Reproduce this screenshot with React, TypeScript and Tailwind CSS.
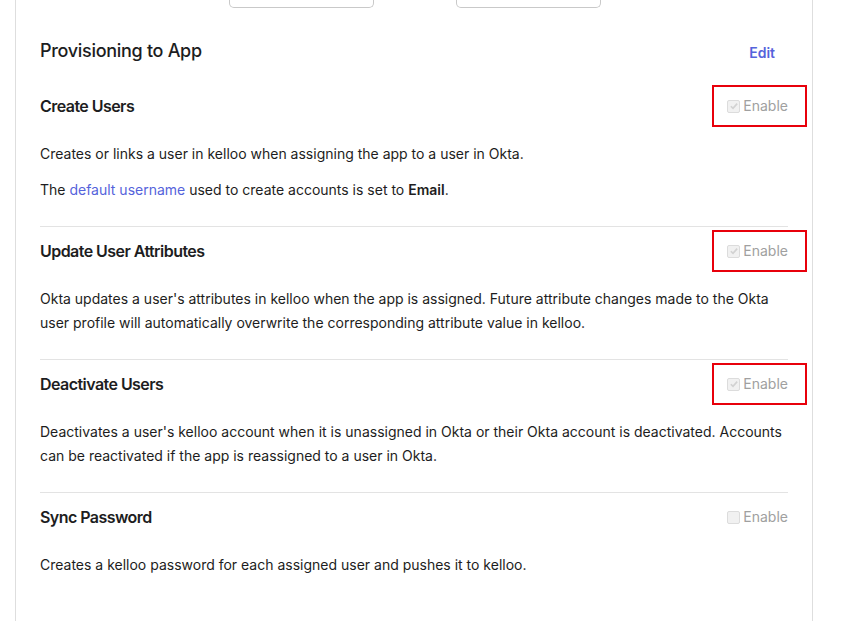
import React from "react";

type Feature = {
  title: string;
  checked: boolean;
  flagged: boolean;
  body: React.ReactNode[];
};

const features: Feature[] = [
  {
    title: "Create Users",
    checked: true,
    flagged: true,
    body: [
      "Creates or links a user in kelloo when assigning the app to a user in Okta.",
      <>
        The <a className="text-[#5563db]">default username</a> used to create accounts is set to{" "}
        <span className="font-semibold">Email</span>.
      </>,
    ],
  },
  {
    title: "Update User Attributes",
    checked: true,
    flagged: true,
    body: [
      "Okta updates a user's attributes in kelloo when the app is assigned. Future attribute changes made to the Okta user profile will automatically overwrite the corresponding attribute value in kelloo.",
    ],
  },
  {
    title: "Deactivate Users",
    checked: true,
    flagged: true,
    body: [
      "Deactivates a user's kelloo account when it is unassigned in Okta or their Okta account is deactivated. Accounts can be reactivated if the app is reassigned to a user in Okta.",
    ],
  },
  {
    title: "Sync Password",
    checked: false,
    flagged: false,
    body: ["Creates a kelloo password for each assigned user and pushes it to kelloo."],
  },
];

function EnableBox({ checked, flagged }: { checked: boolean; flagged: boolean }) {
  return (
    <div className="relative flex items-center gap-[3px] text-sm text-[#a0a0a0]">
      <span className="flex h-[13px] w-[13px] items-center justify-center rounded-[2px] border border-[#dcdcdc] bg-[#f1f1f1]">
        {checked && (
          <svg viewBox="0 0 12 12" className="h-[10px] w-[10px]">
            <path d="M2.2 6.3 4.8 8.8 9.8 3.2" fill="none" stroke="#d2d2d2" strokeWidth="2" />
          </svg>
        )}
      </span>
      <span>Enable</span>
      {flagged && (
        <span className="pointer-events-none absolute -left-[15px] -right-[19px] -top-[11px] -bottom-[11px] border-2 border-[#e8000b]" />
      )}
    </div>
  );
}

export default function App() {
  return (
    <div className="h-[621px] overflow-hidden bg-white font-['Inter','Noto_Sans',sans-serif] text-[#1d1d21]">
      <div className="mx-[15px] h-full w-[798px] border-x border-[#dedede] px-[24px]">
        {/* cut-off buttons above */}
        <div className="flex h-[8px]">
          <div className="ml-[189px] h-[8px] w-[145px] rounded-b-[5px] border-x border-b border-[#c9c9c9]" />
          <div className="ml-[82px] h-[8px] w-[145px] rounded-b-[5px] border-x border-b border-[#c9c9c9]" />
        </div>

        <div className="mt-[31px] flex items-center justify-between">
          <h2 className="text-[18px] font-medium leading-[24px] tracking-[-0.3px]">Provisioning to App</h2>
          <a className="mr-[13px] mt-[4px] text-sm font-semibold text-[#5563db]">Edit</a>
        </div>

        <div className="mt-[9px]">
          {features.map((f, i) => (
            <section
              key={f.title}
              className={i === 0 ? "pt-[24px]" : "border-t border-[#e3e3e3] pt-[14px]"}
            >
              <div className="flex h-[20px] items-center justify-between">
                <h3 className="text-base font-semibold tracking-[-0.55px]">{f.title}</h3>
                <EnableBox checked={f.checked} flagged={f.flagged} />
              </div>
              <div className="mt-[26px] flex flex-col gap-3 pb-[24px] text-sm leading-[24px]">
                {f.body.map((b, j) => (
                  <p key={j}>{b}</p>
                ))}
              </div>
            </section>
          ))}
        </div>
      </div>
    </div>
  );
}
